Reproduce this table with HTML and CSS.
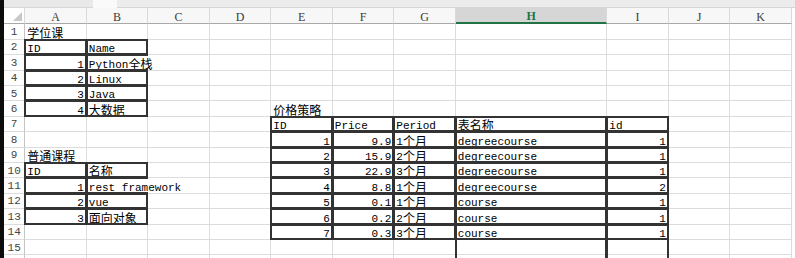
FILE: index.html
```html
<!DOCTYPE html>
<html lang="zh">
<head>
<meta charset="utf-8">
<title>Sheet</title>
<link rel="stylesheet" href="styles.css">
</head>
<body>
<div class="screen">
  <div class="band"></div>
  <div class="app">
    <div class="formula">
      <div class="namebox"></div>
      <div class="fx"></div>
    </div>
    <div class="sheet">
      <div class="hd corner"><svg width="9" height="9" viewBox="0 0 9 9"><polygon points="9,0 9,9 0,9" fill="#c8c8c8"/></svg></div>
      <div class="hd">A</div><div class="hd">B</div><div class="hd">C</div><div class="hd">D</div><div class="hd">E</div><div class="hd">F</div><div class="hd">G</div><div class="hd sel">H</div><div class="hd">I</div><div class="hd">J</div><div class="hd">K</div>

      <div class="rh">1</div><div><span class="zh">学位课</span></div><div></div><div></div><div></div><div></div><div></div><div></div><div></div><div></div><div></div><div></div>

      <div class="rh">2</div><div class="b">ID</div><div class="b">Name</div><div></div><div></div><div></div><div></div><div></div><div></div><div></div><div></div><div></div>

      <div class="rh">3</div><div class="b num">1</div><div class="b nr">Python<span class="zh">全栈</span></div><div></div><div></div><div></div><div></div><div></div><div></div><div></div><div></div><div></div>

      <div class="rh">4</div><div class="b num">2</div><div class="b">Linux</div><div></div><div></div><div></div><div></div><div></div><div></div><div></div><div></div><div></div>

      <div class="rh">5</div><div class="b num">3</div><div class="b">Java</div><div></div><div></div><div></div><div></div><div></div><div></div><div></div><div></div><div></div>

      <div class="rh">6</div><div class="b num">4</div><div class="b"><span class="zh">大数据</span></div><div></div><div></div><div><span class="zh">价格策略</span></div><div></div><div></div><div></div><div></div><div></div><div></div>

      <div class="rh">7</div><div></div><div></div><div></div><div></div><div class="b">ID</div><div class="b">Price</div><div class="b">Period</div><div class="b"><span class="zh">表名称</span></div><div class="b">id</div><div></div><div></div>

      <div class="rh">8</div><div></div><div></div><div></div><div></div><div class="b num">1</div><div class="b num">9.9</div><div class="b">1<span class="zh">个月</span></div><div class="b">degreecourse</div><div class="b num">1</div><div></div><div></div>

      <div class="rh">9</div><div><span class="zh">普通课程</span></div><div></div><div></div><div></div><div class="b num">2</div><div class="b num">15.9</div><div class="b">2<span class="zh">个月</span></div><div class="b">degreecourse</div><div class="b num">1</div><div></div><div></div>

      <div class="rh">10</div><div class="b">ID</div><div class="b"><span class="zh">名称</span></div><div></div><div></div><div class="b num">3</div><div class="b num">22.9</div><div class="b">3<span class="zh">个月</span></div><div class="b">degreecourse</div><div class="b num">1</div><div></div><div></div>

      <div class="rh">11</div><div class="b num">1</div><div class="b nr">rest framework</div><div></div><div></div><div class="b num">4</div><div class="b num">8.8</div><div class="b">1<span class="zh">个月</span></div><div class="b">degreecourse</div><div class="b num">2</div><div></div><div></div>

      <div class="rh">12</div><div class="b num">2</div><div class="b">vue</div><div></div><div></div><div class="b num">5</div><div class="b num">0.1</div><div class="b">1<span class="zh">个月</span></div><div class="b">course</div><div class="b num">1</div><div></div><div></div>

      <div class="rh">13</div><div class="b num">3</div><div class="b"><span class="zh">面向对象</span></div><div></div><div></div><div class="b num">6</div><div class="b num">0.2</div><div class="b">2<span class="zh">个月</span></div><div class="b">course</div><div class="b num">1</div><div></div><div></div>

      <div class="rh">14</div><div></div><div></div><div></div><div></div><div class="b num">7</div><div class="b num">0.3</div><div class="b">3<span class="zh">个月</span></div><div class="b">course</div><div class="b num">1</div><div></div><div></div>

      <div class="rh">15</div><div></div><div></div><div></div><div></div><div></div><div></div><div></div><div class="side"></div><div class="side"></div><div></div><div></div>

      <div class="rh"></div><div></div><div></div><div></div><div></div><div></div><div></div><div></div><div class="side"></div><div class="side"></div><div></div><div></div>
    </div>
  </div>
</div>
</body>
</html>
```
FILE: styles.css
```css
html, body {
  margin: 0;
  padding: 0;
  background: #fff;
  overflow: hidden;
}
body {
  width: 795px;
  height: 258px;
  font-family: "Liberation Mono", "Noto Sans CJK SC", monospace;
  font-size: 11px;
  color: #000;
}
.screen {
  display: flex;
  width: 795px;
  height: 258px;
  overflow: hidden;
}
.band {
  width: 4px;
  flex: none;
  background: #0c0c0c;
}
.app {
  flex: 1;
  min-width: 0;
  display: flex;
  flex-direction: column;
}
.formula {
  height: 8px;
  flex: none;
  display: flex;
  gap: 24px;
  background: #fafafa;
  box-sizing: border-box;
}
.namebox {
  width: 89px;
  background: #e9e9e9;
  border-bottom: 1px solid #d6d6d6;
}
.fx {
  flex: 1;
  background: #ececec;
  border-bottom: 1px solid #d6d6d6;
}

.sheet {
  display: grid;
  grid-template-columns: 21.3px repeat(7, 61.5px) 151.5px repeat(3, 61.5px);
  grid-template-rows: 16.3px repeat(16, 15.42px);
}
.sheet > div {
  box-sizing: border-box;
  min-width: 0;
  display: flex;
  align-items: flex-end;
  padding: 0 2px;
  line-height: 9px;
  white-space: nowrap;
  border-right: 1px solid #dcdcdc;
  border-bottom: 1px solid #dcdcdc;
}
.sheet > .hd {
  justify-content: center;
  align-items: center;
  padding: 2px 0 0;
  font-family: "Liberation Serif", "Noto Sans CJK SC", serif;
  font-size: 12px;
  line-height: 12px;
  background: #f7f7f7;
  color: #3c3c3c;
  border-right-color: #d9d9d9;
  border-bottom-color: #a9a9a9;
}
.sheet > .corner {
  justify-content: flex-end;
  align-items: flex-end;
  padding: 0 2px 2px 0;
  background: #fff;
  line-height: 0;
}
.sheet > .sel {
  background: #d6d6d6;
  color: #217346;
  font-weight: bold;
  border-bottom: 2px solid #217346;
}
.sheet > .rh {
  justify-content: center;
  align-items: center;
  padding: 1px 0 0;
  line-height: 12px;
  color: #444;
  border-right-color: #c4c4c4;
}
.zh {
  position: relative;
  top: -2px;
  font-family: "Noto Sans CJK SC", sans-serif;
  font-size: 12px;
  line-height: 9px;
}
.sheet > .num {
  justify-content: flex-end;
}
.sheet > .b,
.sheet > .side {
  position: relative;
}
.sheet > .b::after,
.sheet > .side::after {
  content: "";
  position: absolute;
  left: -1px;
  top: -1px;
  right: -1px;
  bottom: -1px;
  border: 2px solid #333;
  pointer-events: none;
}
.sheet > .nr {
  border-right-color: transparent;
}
.sheet > .nr::after {
  border-right: none;
}
.sheet > .side::after {
  border-top: none;
  border-bottom: none;
}
```
